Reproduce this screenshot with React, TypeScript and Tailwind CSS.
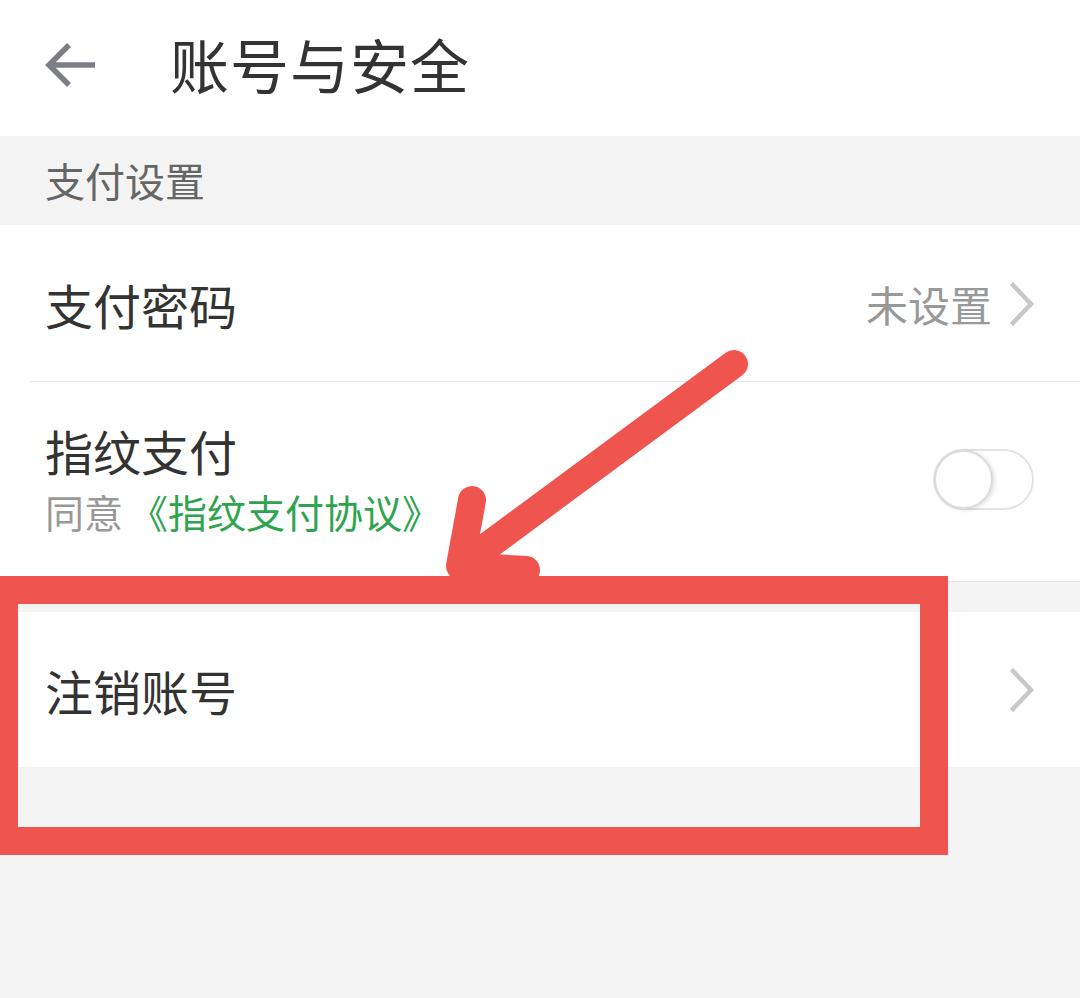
import React from 'react';

const font = { fontFamily: '"Noto Sans CJK SC", "Noto Sans", sans-serif' };

const Chevron = () => (
  <svg width="28" height="44" viewBox="0 0 28 44" fill="none">
    <path d="M5 3 L23 22 L5 41" stroke="#c8c8c8" strokeWidth="4.5" strokeLinecap="square" strokeLinejoin="miter" />
  </svg>
);

const App = () => {
  return (
    <div className="relative w-[1080px] h-[998px] bg-[#f4f4f4] overflow-hidden" style={font}>
      {/* header */}
      <div className="h-[136px] bg-white flex items-center pl-[43px]">
        <svg width="54" height="50" viewBox="0 0 54 50" fill="none" className="-mt-[6px]">
          <path d="M52 25 H6 M26 5 L6 25 L26 45" stroke="#7d7d87" strokeWidth="5.5" />
        </svg>
        <h1 className="ml-[73px] text-[59px] leading-none text-[#333333] -mt-[10px] tracking-[1px]">账号与安全</h1>
      </div>

      {/* section label */}
      <div className="h-[89px] flex items-center pl-[45px]">
        <span className="text-[40px] leading-none text-[#666666] -mt-[2px]">支付设置</span>
      </div>

      {/* rows */}
      <div className="bg-white">
        <div className="h-[156px] flex items-center justify-between pl-[45px] pr-[44px]">
          <span className="text-[48px] leading-none text-[#333333] mt-[2px]">支付密码</span>
          <div className="flex items-center gap-[16px] mt-[2px]">
            <span className="text-[42px] leading-none text-[#999999]">未设置</span>
            <Chevron />
          </div>
        </div>
        <div className="ml-[30px] h-px bg-[#e6e6e6]" />
        <div className="h-[200px] flex items-center justify-between pl-[45px] pr-[46px] border-b border-[#e6e6e6]">
          <div className="flex flex-col mt-[-6px]">
            <span className="text-[48px] leading-none text-[#333333]">指纹支付</span>
            <span className="mt-[18px] text-[39px] leading-none text-[#999999]">
              同意<span className="ml-[6px] text-[#2ea44f]">《指纹支付协议》</span>
            </span>
          </div>
          <div className="relative w-[101px] h-[61px] rounded-full border-2 border-[#e3e3e3] bg-white -mt-[4px]">
            <div className="absolute left-[-1px] top-[-1px] w-[59px] h-[59px] rounded-full bg-white border-2 border-[#dcdcdc] shadow-[2px_1px_4px_rgba(0,0,0,0.12)]" />
          </div>
        </div>
      </div>

      <div className="h-[30px]" />

      <div className="bg-white h-[155px] flex items-center justify-between pl-[45px] pr-[44px]">
        <span className="text-[48px] leading-none text-[#333333]">注销账号</span>
        <Chevron />
      </div>

      {/* annotation overlay */}
      <svg className="absolute left-0 top-0 pointer-events-none" width="1080" height="998" viewBox="0 0 1080 998" fill="none">
        <rect x="4" y="590" width="930" height="251" stroke="#ef544e" strokeWidth="28" />
        <path d="M734 364 L466 562" stroke="#ef544e" strokeWidth="28" strokeLinecap="round" />
        <path d="M472 500 L460 566 L526 570" stroke="#ef544e" strokeWidth="28" strokeLinecap="round" strokeLinejoin="round" />
      </svg>
    </div>
  );
};

export default App;
